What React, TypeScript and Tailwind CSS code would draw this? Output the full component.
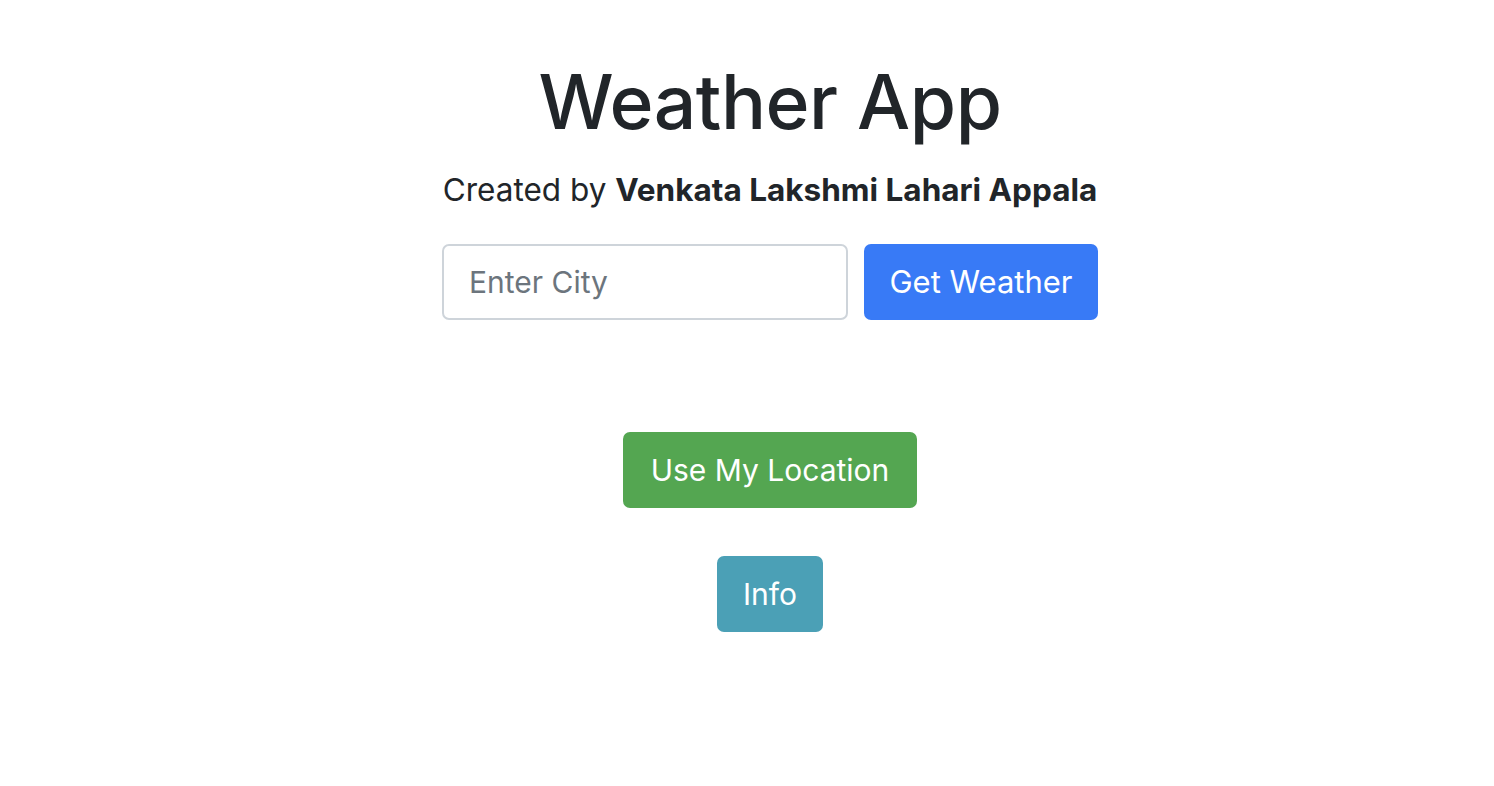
import React from "react";

export default function App() {
  return (
    <div className="min-h-screen bg-white flex flex-col items-center pl-[46px] text-[#212529]" style={{ fontFamily: "Inter, 'Noto Sans', sans-serif" }}>
      <h1 className="mt-[62px] text-[75px] leading-[80px] font-medium tracking-[-0.5px]">Weather App</h1>
      <p className="mt-[30px] text-[31.5px] leading-[36px]">
        Created by <span className="font-bold">Venkata Lakshmi Lahari Appala</span>
      </p>
      <div className="mt-[36px] flex gap-4">
        <input
          type="text"
          placeholder="Enter City"
          className="w-[406px] h-[76px] px-[25px] border-2 border-[#ced4da] rounded-[7px] text-[30px] placeholder:text-[#6c757d] outline-none"
        />
        <button className="w-[234px] h-[76px] rounded-[7px] bg-[#387af6] text-white text-[31px]">Get Weather</button>
      </div>
      <button className="mt-[112px] w-[294px] h-[76px] rounded-[7px] bg-[#54a651] text-white text-[30px]">Use My Location</button>
      <button className="mt-[48px] w-[106px] h-[76px] rounded-[7px] bg-[#4ba0b6] text-white text-[30px]">Info</button>
    </div>
  );
}
